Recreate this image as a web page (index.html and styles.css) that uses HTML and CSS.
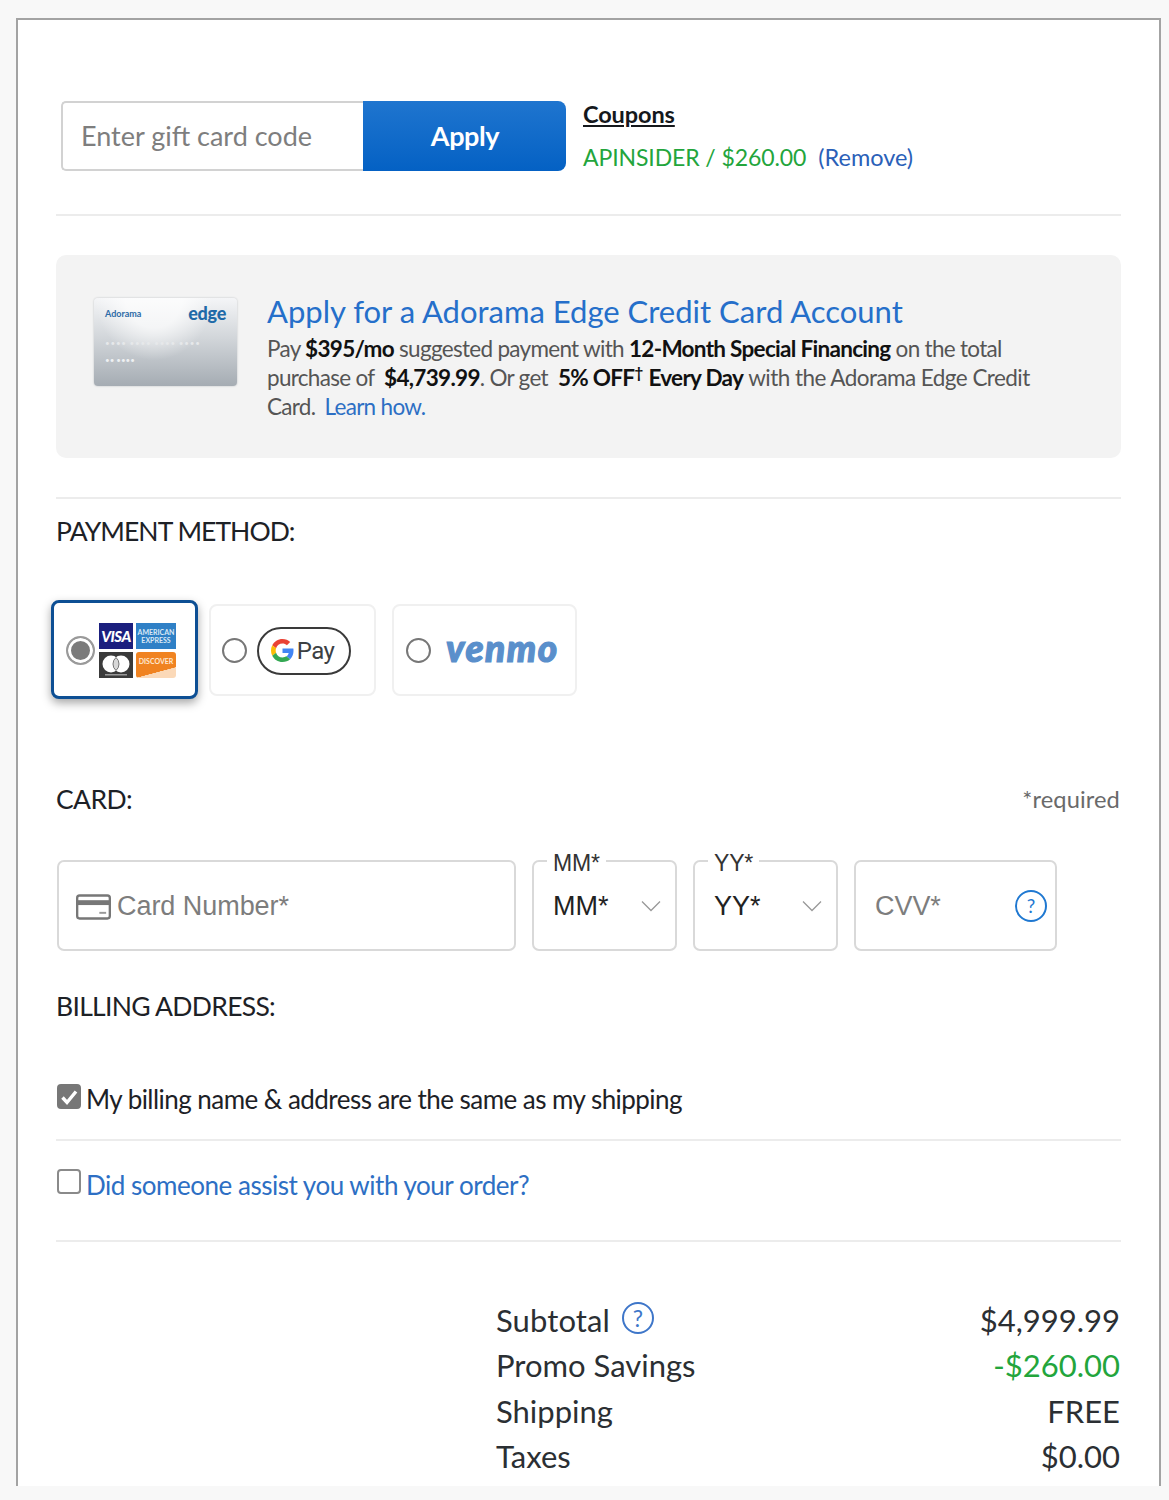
FILE: index.html
```html
<!DOCTYPE html>
<html lang="en">
<head>
<meta charset="utf-8">
<title>Checkout payment</title>
<link rel="stylesheet" href="styles.css">
</head>
<body>
<main class="panel">
  <section class="coupon-row">
    <div class="gift">
      <div class="gift-input">Enter gift card code</div>
      <button class="apply" type="button">Apply</button>
    </div>
    <div class="coupons">
      <a class="coupons-title">Coupons</a>
      <div class="coupon-line"><span class="green">APINSIDER / $260.00</span><a class="remove">(Remove)</a></div>
    </div>
  </section>
  <hr class="rule rule-coupon">

  <section class="promo">
    <div class="edge-card">
      <div class="edge-top"><span class="edge-brand">Adorama</span><span class="edge-word">edge</span></div>
      <div class="edge-num">•••• •••• •••• ••••</div>
      <div class="edge-name">•• ••••</div>
    </div>
    <div class="promo-copy">
      <h2 class="promo-title">Apply for a Adorama Edge Credit Card Account</h2>
      <p class="promo-text">Pay <b>$395/mo</b> suggested payment with <b>12-Month Special Financing</b> on the total<br>purchase of <b class="gap">$4,739.99</b>. Or get <b class="gap">5% OFF<sup>†</sup></b> <b class="gap-end">Every Day</b> <span class="tail">with the Adorama Edge Credit</span><br>Card. <a class="learn">Learn how.</a></p>
    </div>
  </section>
  <hr class="rule rule-promo">

  <h3 class="heading heading-payment">PAYMENT METHOD:</h3>
  <section class="methods">
    <div class="method method-card">
      <span class="radio radio-on"></span>
      <div class="logos">
        <span class="logo logo-visa">VISA</span>
        <span class="logo logo-amex">AMERICAN<br>EXPRESS</span>
        <span class="logo logo-mc"><svg viewBox="0 0 34 26" width="34" height="26"><circle cx="12" cy="12" r="8.5" fill="#fff"/><circle cx="22" cy="12" r="8.5" fill="#fff"/><path d="M17 5.5a8.5 8.5 0 0 1 0 13a8.500 8.500 0 0 1 0-13z" fill="#d8d8d8" stroke="#444" stroke-width=".7"/><rect x="6" y="22" width="22" height="1.500" fill="#999"/></svg></span>
        <span class="logo logo-disc">DISCOVER</span>
      </div>
    </div>
    <div class="method method-gpay">
      <span class="radio"></span>
      <div class="gpay">
        <svg class="g-mark" viewBox="0 0 48 48" width="23" height="23"><path fill="#ea4335" d="M24 9.500c3.500 0 6.700 1.200 9.200 3.600l6.900-6.900C35.900 2.400 30.500 0 24 0 14.600 0 6.500 5.400 2.600 13.200l8 6.200C12.400 13.700 17.700 9.500 24 9.500z"/><path fill="#4285f4" d="M47 24.500c0-1.600-.1-3.100-.4-4.500H24v9h12.900c-.6 3-2.200 5.500-4.700 7.200l7.700 6C44.400 38 47 31.800 47 24.500z"/><path fill="#fbbc05" d="M10.600 28.600c-.5-1.400-.8-3-.8-4.600s.3-3.200.8-4.600l-8-6.200C.9 16.500 0 20.100 0 24s.9 7.500 2.600 10.800l8-6.200z"/><path fill="#34a853" d="M24 48c6.500 0 11.900-2.100 15.900-5.800l-7.700-6c-2.200 1.500-4.900 2.300-8.200 2.300-6.300 0-11.600-4.200-13.400-9.900l-8 6.200C6.500 42.600 14.600 48 24 48z"/></svg>
        <span class="gpay-word">Pay</span>
      </div>
    </div>
    <div class="method method-venmo">
      <span class="radio"></span>
      <span class="venmo">venmo</span>
    </div>
  </section>

  <div class="card-head">
    <h3 class="heading heading-card">CARD:</h3>
    <span class="required">*required</span>
  </div>
  <section class="fields">
    <div class="field field-number">
      <svg class="card-icon" viewBox="0 0 36 26" width="35" height="26"><rect x="1.200" y="1.200" width="33.600" height="23.600" rx="2.500" fill="#fff" stroke="#777" stroke-width="2.400"/><rect x="1" y="6" width="34" height="5" fill="#777"/><rect x="24" y="18" width="7" height="2" fill="#999"/></svg>
      <span class="placeholder">Card Number*</span>
    </div>
    <div class="field field-select">
      <span class="legend">MM*</span>
      <span class="value">MM*</span>
      <svg class="chev" viewBox="0 0 20 12" width="20" height="12"><path d="M1 1.500l9 9 9-9" fill="none" stroke="#999" stroke-width="1.300"/></svg>
    </div>
    <div class="field field-select">
      <span class="legend">YY*</span>
      <span class="value">YY*</span>
      <svg class="chev" viewBox="0 0 20 12" width="20" height="12"><path d="M1 1.500l9 9 9-9" fill="none" stroke="#999" stroke-width="1.300"/></svg>
    </div>
    <div class="field field-cvv">
      <span class="placeholder">CVV*</span>
      <span class="help help-cvv">?</span>
    </div>
  </section>

  <h3 class="heading heading-billing">BILLING ADDRESS:</h3>
  <label class="check-row check-billing">
    <span class="check check-on"><svg viewBox="0 0 24 24" width="24" height="24"><path d="M5.500 12.500l4.500 5 9-11" fill="none" stroke="#fff" stroke-width="3.400"/></svg></span>
    <span class="check-label">My billing name &amp; address are the same as my shipping</span>
  </label>
  <hr class="rule rule-billing">
  <label class="check-row check-assist">
    <span class="check"></span>
    <a class="check-label assist">Did someone assist you with your order?</a>
  </label>
  <hr class="rule rule-assist">

  <section class="summary">
    <div class="sum-row"><span class="sum-label">Subtotal <span class="help help-sub">?</span></span><span>$4,999.99</span></div>
    <div class="sum-row"><span>Promo Savings</span><span class="green">-$260.00</span></div>
    <div class="sum-row"><span>Shipping</span><span>FREE</span></div>
    <div class="sum-row"><span>Taxes</span><span>$0.00</span></div>
  </section>
</main>
</body>
</html>
```

FILE: styles.css
```css
* { box-sizing: border-box; }
html, body { margin: 0; background: #f8f8f8; }
body { padding: 18px 8px 14px 16px; font-family: "Lato", "Liberation Sans", sans-serif; color: #1f2328; }
.panel { height: 1468px; background: #fff; border: 2px solid #a3a3a3; border-bottom: 0; padding: 0 38px; overflow: hidden; }
a { color: #2d6fc4; }
.green { color: #23a53c; }
.rule { border: 0; height: 2px; background: #ececec; margin: 0; }
.rule-coupon { margin-top: 43px; }
.rule-promo { margin-top: 39px; }
.rule-billing { margin-top: 30px; }
.rule-assist { margin-top: 46px; }

.coupon-row { display: flex; margin: 81px 0 0 5px; height: 70px; }
.gift { display: flex; width: 505px; height: 70px; }
.gift-input { width: 302px; border: 2px solid #d2d2d2; border-right: 0; border-radius: 5px 0 0 5px; padding-left: 18px; font-size: 27px; line-height: 66px; color: #7e7e7e; letter-spacing: 0; }
.apply { width: 203px; border: 0; border-radius: 0 8px 8px 0; background: linear-gradient(#1f75cf, #0461c4); color: #fff; font: 700 27px "Lato", sans-serif; letter-spacing: -.4px; padding: 0 0 2px 1px; }
.coupons { margin: -1px 0 0 17px; }
.coupons-title { display: block; font-size: 23.500px; font-weight: 700; line-height: 28px; color: #15181c; text-decoration: underline; letter-spacing: -.1px; }
.coupon-line { display: flex; gap: 12px; margin-top: 15px; font-size: 23px; line-height: 28px; letter-spacing: -.1px; }
.remove { color: #2a60b8; font-size: 23.500px; letter-spacing: 0; }

.promo { display: flex; height: 203px; margin-top: 39px; padding: 43px 20px 0 38px; background: #f3f3f3; border-radius: 10px; }
.edge-card { flex: none; width: 143px; height: 88px; padding: 5px 11px; border-radius: 4px; background: radial-gradient(ellipse at 42% 0, rgba(255,255,255,.7) 0 24%, transparent 50%), linear-gradient(#f4f5f7 0, #d2d6da 45%, #a5acb3 100%); box-shadow: 0 0 2px #b4b8bc; color: #fff; }
.edge-top { display: flex; justify-content: space-between; align-items: center; }
.edge-brand { color: #2d6ba6; font-size: 9px; font-weight: 700; }
.edge-word { color: #1f6aa8; font-size: 18px; font-weight: 900; letter-spacing: -.3px; line-height: 20px; }
.edge-num { margin-top: 14px; font-size: 8px; letter-spacing: .8px; color: #e6e8ea; line-height: 12px; white-space: nowrap; }
.edge-name { margin-top: 6px; font-size: 8px; color: #eef0f2; }
.promo-copy { margin: -7px 0 0 30px; }
.promo-title { margin: 0; font-size: 31px; line-height: 40px; font-weight: 400; color: #256fca; white-space: nowrap; }
.promo-text { margin: 3px 0 0; font-size: 22.500px; line-height: 29px; color: #555; letter-spacing: -.7px; white-space: nowrap; }
.promo-text b { color: #111; }
.promo-text .gap { margin: 0 0 0 5px; }
.promo-text .gap-end { margin: 0 0 0 1px; }
.promo-text .tail { letter-spacing: -.55px; }
.promo-text sup { font-size: 15px; line-height: 0; }
.learn { color: #2d6fc4; margin-left: 4px; }

.heading { margin: 0; font-size: 26.500px; line-height: 30px; font-weight: 400; color: #1d2126; letter-spacing: -.7px; }
.heading-payment { margin-top: 17px; letter-spacing: -.95px; }
.heading-card { letter-spacing: -.6px; }
.heading-billing { margin-top: 40px; }

.methods { display: flex; align-items: center; height: 99px; margin: 54px 0 0 -5px; }
.method { display: flex; align-items: center; height: 92px; background: #fff; border: 2px solid #f0f0f0; border-radius: 8px; margin-left: 16px; padding: 2px 0 0 12px; }
.method-card { width: 147px; height: 99px; margin-left: 0; border: 3px solid #0d4f94; padding-left: 12px; box-shadow: 0 4px 10px rgba(0,0,0,.35); }
.method-gpay { width: 167px; margin-left: 11px; padding-left: 11px; }
.method-venmo { width: 185px; }
.radio { flex: none; display: block; width: 25px; height: 25px; border: 2px solid #777; border-radius: 50%; background: #fff; }
.radio-on { width: 29px; height: 29px; border: 2px solid #9a9a9a; background: #7b7b7b; box-shadow: inset 0 0 0 3px #fff; }
.logos { display: grid; grid-template-columns: 34px 40px; grid-auto-rows: 26px; gap: 3px; margin-left: 4px; }
.logo { display: block; overflow: hidden; text-align: center; }
.logo-visa { background: #1b1f7e; color: #fff; font-size: 15px; font-weight: 900; font-style: italic; line-height: 26px; letter-spacing: -.5px; }
.logo-amex { background: #2f80c6; color: #dbe9f5; font-size: 7px; line-height: 8px; padding-top: 5px; font-weight: 700; }
.logo-mc { background: #3a3a3a; }
.logo-disc { background: linear-gradient(165deg, #f08321 0 70%, #fbd9b8 71%); color: #ffe9d2; font-size: 7px; line-height: 18px; font-weight: 700; border-radius: 3px; }

.gpay { display: flex; align-items: center; justify-content: center; gap: 3px; width: 94px; height: 48px; margin-left: 10px; border: 2px solid #3a3a3a; border-radius: 24px; padding-right: 3px; }
.gpay-word { font-family: "Roboto", sans-serif; font-size: 24px; color: #3c4043; letter-spacing: -.5px; }
.venmo { margin: 0 0 5px 15px; font-size: 37px; font-weight: 900; font-style: italic; color: #5a8fcb; letter-spacing: 1.500px; line-height: 40px; -webkit-text-stroke: 1.200px #5a8fcb; }

.card-head { display: flex; justify-content: space-between; align-items: center; margin-top: 85px; height: 30px; padding-right: 1px; }
.required { font-size: 23.700px; color: #6a6a6a; letter-spacing: .1px; }

.fields { display: flex; gap: 16px; margin-top: 46px; }
.field { position: relative; display: flex; align-items: center; height: 91px; border: 2px solid #d9d9d9; border-radius: 7px; padding-top: 2px; font-family: "Liberation Sans", Arial, sans-serif; font-size: 27px; }
.field-number { width: 459px; margin-left: 1px; padding-left: 17px; }
.card-icon { flex: none; margin-right: 6px; }
.placeholder { color: #7d7d7d; letter-spacing: -.05px; }
.field-select { width: 145px; padding-left: 19px; }
.field-cvv { width: 203px; padding-left: 19px; }
.legend { position: absolute; top: -12px; left: 13px; padding: 0 6px; background: #fff; font-size: 23px; line-height: 26px; color: #333; letter-spacing: -.2px; }
.value { color: #222; }
.chev { position: absolute; right: 14px; top: 38px; }
.help { display: inline-block; width: 32px; height: 32px; border: 2px solid #1f78d1; border-radius: 50%; text-align: center; color: #1f78d1; font-family: "Lato", sans-serif; font-size: 19px; line-height: 28px; }
.help-cvv { position: absolute; right: 8px; top: 28px; }
.help-sub { border-color: #3e76c9; color: #3e76c9; font-size: 23px; }

.check-row { display: flex; align-items: center; height: 25px; margin-left: 1px; }
.check-billing { margin-top: 63px; }
.check-assist { margin-top: 28px; }
.check { flex: none; display: block; width: 24px; height: 25px; border: 2px solid #8a8a8a; border-radius: 4px; background: #fff; overflow: hidden; }
.check-on { background: #777; border-color: #777; }
.check-on svg { display: block; margin: -1px 0 0 -2px; }
.check-label { margin: 4px 0 0 5px; font-size: 26px; line-height: 30px; letter-spacing: -.54px; color: #1d2126; }
.assist { margin-top: 6px; color: #2d6fc4; letter-spacing: -.48px; }

.summary { margin: 55px 1px 0 440px; font-size: 31px; color: #2b2f33; }
.sum-row { display: flex; justify-content: space-between; align-items: center; height: 45.500px; }
.sum-label { display: flex; align-items: center; gap: 12px; letter-spacing: .1px; }
.sum-label .help { margin-top: -3px; letter-spacing: 0; }
```
